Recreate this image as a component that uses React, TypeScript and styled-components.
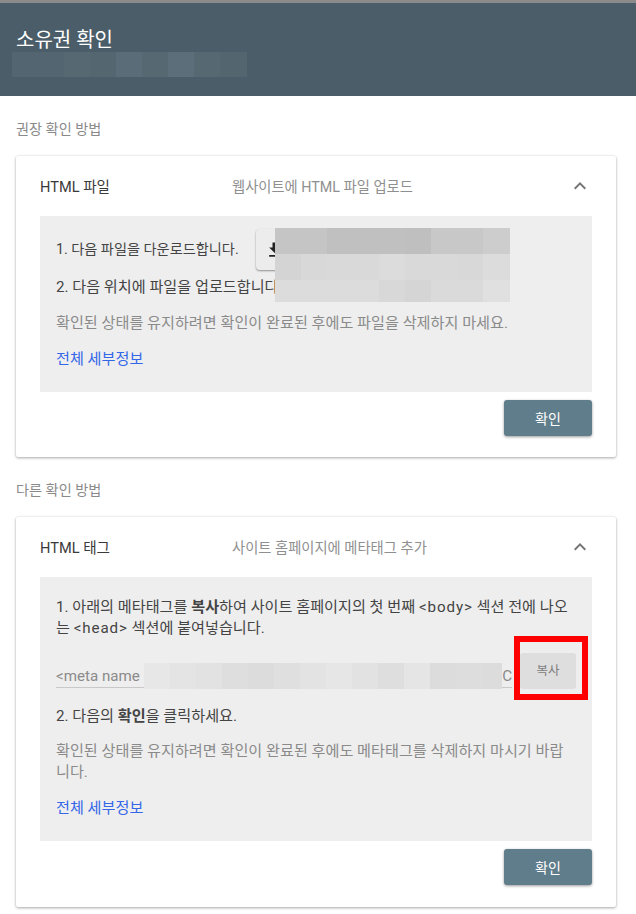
import React from "react";
import styled, { createGlobalStyle } from "styled-components";

const Global = createGlobalStyle`
  html, body { margin: 0; padding: 0; background: #fff; }
  body { font-family: Roboto, "Noto Sans CJK KR", sans-serif; width: 636px; height: 914px; overflow: hidden; }
  * { box-sizing: border-box; }
`;

const Page = styled.div`
  width: 636px;
  height: 914px;
  position: relative;
  overflow: hidden;
`;

const TopStrip = styled.div`
  height: 3px;
  background: #8b8b8b;
`;

const Header = styled.header`
  height: 93px;
  background: #4a5d68;
  padding: 22px 16px 0;
`;

const Title = styled.h1`
  margin: 0;
  font-size: 20px;
  line-height: 30px;
  font-weight: 400;
  color: #fff;
`;

const SectionLabel = styled.div<{ $gap?: number }>`
  font-size: 14.2px;
  line-height: 20px;
  color: #8a8a8a;
  padding: 0 16px;
  height: 20px;
  margin-top: ${(p) => p.$gap ?? 0}px;
`;

const Main = styled.main`
  padding-top: 23px;
`;

const Card = styled.section<{ $h: number }>`
  margin: 17px 20px 0 16px;
  height: ${(p) => p.$h}px;
  background: #fff;
  border-radius: 2px;
  box-shadow: 0 1px 3px rgba(0, 0, 0, 0.32), 0 0 2px rgba(0, 0, 0, 0.08);
  padding: 0 24px;
`;

const CardHead = styled.div`
  height: 58px;
  margin-bottom: 2px;
  display: flex;
  align-items: center;
`;

const CardTitle = styled.div`
  width: 192px;
  font-size: 14.6px;
  color: #3a3a3a;
`;

const CardDesc = styled.div`
  flex: 1;
  font-size: 14.3px;
  color: #8f8f8f;
`;

const Chevron = styled.svg`
  width: 24px;
  height: 24px;
  fill: #757575;
  transform: translateY(1px);
`;

const Panel = styled.div<{ $h: number }>`
  height: ${(p) => p.$h}px;
  background: #eee;
  padding: 0 16px;
`;

const Line = styled.p<{ $muted?: boolean; $top?: number; $size?: number; $pad?: number }>`
  margin: ${(p) => p.$top ?? 0}px 0 0;
  padding-top: ${(p) => p.$pad ?? 0}px;
  font-size: ${(p) => p.$size ?? 15.15}px;
  line-height: 21px;
  color: ${(p) => (p.$muted ? "#8a8a8a" : "#444")};
`;

const Code = styled.span`
  letter-spacing: 0.9px;
`;

const FileRow = styled.div`
  display: flex;
  align-items: center;
  padding-top: 13px;
  height: 54px;
  gap: 17px;
`;

const DownloadBtn = styled.div`
  width: 190px;
  height: 41px;
  background: #ececec;
  border-radius: 4px;
  box-shadow: 0 1px 2px rgba(0, 0, 0, 0.4);
  padding-left: 9px;
  display: flex;
  align-items: center;
`;

const DlIcon = styled.svg`
  width: 20px;
  height: 20px;
  fill: #222;
`;

const LearnMore = styled.a<{ $top: number }>`
  display: block;
  margin-top: ${(p) => p.$top}px;
  font-size: 15.15px;
  line-height: 20px;
  color: #3367e8;
`;

const ActionRow = styled.div`
  display: flex;
  justify-content: flex-end;
  padding-top: 8px;
`;

const Confirm = styled.div`
  width: 88px;
  height: 36px;
  border-radius: 3px;
  background: #607d8b;
  color: #fff;
  font-size: 14px;
  display: flex;
  align-items: center;
  justify-content: center;
  box-shadow: 0 1px 3px rgba(0, 0, 0, 0.4);
`;

const MetaRow = styled.div`
  display: flex;
  height: 42px;
  margin-top: 14px;
  gap: 8px;
`;

const MetaField = styled.div`
  width: 456px;
  height: 35px;
  border-bottom: 1px solid #c8c8c8;
  font-size: 15.15px;
  line-height: 27px;
  color: #8a8a8a;
  padding-top: 10px;
  display: flex;
  justify-content: space-between;
  overflow: hidden;
`;

const CopyBtn = styled.div`
  width: 56px;
  height: 36px;
  border-radius: 3px;
  background: #dedede;
  color: #7d7d7d;
  font-size: 12.5px;
  padding-bottom: 3px;
  display: flex;
  align-items: center;
  justify-content: center;
`;

const Highlight = styled.div`
  position: absolute;
  left: 514px;
  top: 636px;
  width: 74px;
  height: 64px;
  border: 6px solid #fe0000;
`;

const Mosaic = styled.div<{ $x: number; $y: number; $w: number }>`
  position: absolute;
  left: ${(p) => p.$x}px;
  top: ${(p) => p.$y}px;
  width: ${(p) => p.$w}px;
  display: flex;
  flex-direction: column;
`;

const MosaicRow = styled.div<{ $h: number }>`
  display: flex;
  height: ${(p) => p.$h}px;
`;

const Cell = styled.div<{ $w: number; $c: string }>`
  width: ${(p) => p.$w}px;
  background: ${(p) => p.$c};
  flex: none;
`;

function Blur({ x, y, w, rows }: { x: number; y: number; w: number; rows: { h: number; cells: [number, string][] }[] }) {
  return (
    <Mosaic $x={x} $y={y} $w={w}>
      {rows.map((r, i) => (
        <MosaicRow key={i} $h={r.h}>
          {r.cells.map(([cw, c], j) => (
            <Cell key={j} $w={cw} $c={c} />
          ))}
        </MosaicRow>
      ))}
    </Mosaic>
  );
}

const up = "M7.41 15.41 12 10.83l4.59 4.58L18 14l-6-6-6 6z";

export default function App() {
  return (
    <Page>
      <Global />
      <TopStrip />
      <Header>
        <Title>소유권 확인</Title>
      </Header>
      <Main>
        <SectionLabel>권장 확인 방법</SectionLabel>
        <Card $h={301}>
          <CardHead>
            <CardTitle>HTML 파일</CardTitle>
            <CardDesc>웹사이트에 HTML 파일 업로드</CardDesc>
            <Chevron viewBox="0 0 24 24"><path d={up} /></Chevron>
          </CardHead>
          <Panel $h={176}>
            <FileRow>
              <Line $size={14.2}>1. 다음 파일을 다운로드합니다.</Line>
              <DownloadBtn>
                <DlIcon viewBox="0 0 24 24"><path d="M19 9h-4V3H9v6H5l7 7 7-7zM5 18v2h14v-2H5z" /></DlIcon>
              </DownloadBtn>
            </FileRow>
            <Line $top={7}>2. 다음 위치에 파일을 업로드합니다</Line>
            <Line $muted $top={15}>확인된 상태를 유지하려면 확인이 완료된 후에도 파일을 삭제하지 마세요.</Line>
            <LearnMore $top={15}>전체 세부정보</LearnMore>
          </Panel>
          <ActionRow><Confirm>확인</Confirm></ActionRow>
        </Card>
        <SectionLabel $gap={23}>다른 확인 방법</SectionLabel>
        <Card $h={390}>
          <CardHead>
            <CardTitle>HTML 태그</CardTitle>
            <CardDesc>사이트 홈페이지에 메타태그 추가</CardDesc>
            <Chevron viewBox="0 0 24 24"><path d={up} /></Chevron>
          </CardHead>
          <Panel $h={264}>
            <Line $pad={20}>
              1. 아래의 메타태그를 <b>복사</b>하여 사이트 홈페이지의 첫 번째 <Code>&lt;body&gt;</Code> 섹션 전에 나오는 <Code>&lt;head&gt;</Code> 섹션에 붙여넣습니다.
            </Line>
            <MetaRow>
              <MetaField><span>&lt;meta name</span><span>C</span></MetaField>
              <CopyBtn>복사</CopyBtn>
            </MetaRow>
            <Line $top={11}>2. 다음의 <b>확인</b>을 클릭하세요.</Line>
            <Line $muted $top={14}>확인된 상태를 유지하려면 확인이 완료된 후에도 메타태그를 삭제하지 마시기 바랍니다.</Line>
            <LearnMore $top={15}>전체 세부정보</LearnMore>
          </Panel>
          <ActionRow><Confirm>확인</Confirm></ActionRow>
        </Card>
      </Main>
      <Blur x={12} y={52} w={235} rows={[{ h: 25, cells: [[52, "#526570"], [26, "#566872"], [26, "#546670"], [26, "#5a6c77"], [26, "#566872"], [26, "#5c6e79"], [26, "#566871"], [27, "#536670"]] }]} />
      <Blur x={275} y={228} w={235} rows={[
        { h: 26, cells: [[52, "#c5c5c5"], [78, "#c0c0c0"], [26, "#bfbfbf"], [52, "#c8c8c8"], [27, "#cdcdcd"]] },
        { h: 26, cells: [[26, "#d4d4d4"], [26, "#d8d8d8"], [52, "#d9d9d9"], [26, "#dcdcdc"], [52, "#d9d9d9"], [26, "#d8d8d8"], [27, "#dcdcdc"]] },
        { h: 22, cells: [[104, "#dcdcdc"], [26, "#d8d8d8"], [26, "#d5d5d5"], [52, "#dadada"], [27, "#e0e0e0"]] },
      ]} />
      <Blur x={144} y={663} w={358} rows={[{ h: 26, cells: [[26, "#e7e7e7"], [26, "#e4e4e4"], [26, "#e2e2e2"], [26, "#dedede"], [26, "#dcdcdc"], [26, "#dfdfdf"], [26, "#e3e3e3"], [26, "#e6e6e6"], [26, "#e2e2e2"], [26, "#dedede"], [26, "#e5e5e5"], [26, "#dcdcdc"], [26, "#dddddd"], [20, "#dcdcdc"]] }]} />
      <Highlight />
    </Page>
  );
}
